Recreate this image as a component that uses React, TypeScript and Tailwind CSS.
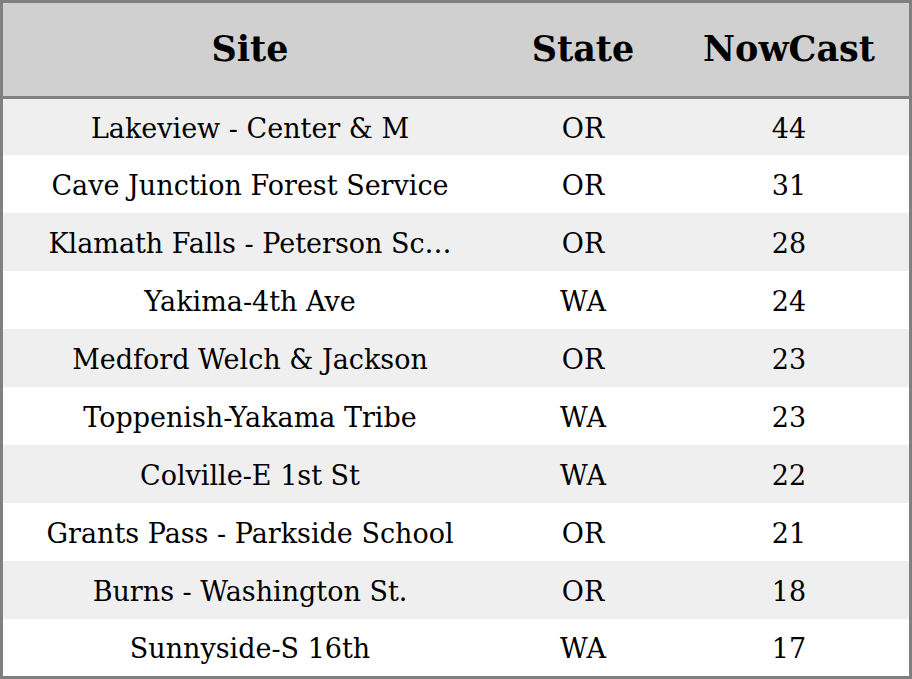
import React from "react";

const rows: [string, string, string][] = [
  ["Lakeview - Center & M", "OR", "44"],
  ["Cave Junction Forest Service", "OR", "31"],
  ["Klamath Falls - Peterson Sc\u2026", "OR", "28"],
  ["Yakima-4th Ave", "WA", "24"],
  ["Medford Welch & Jackson", "OR", "23"],
  ["Toppenish-Yakama Tribe", "WA", "23"],
  ["Colville-E 1st St", "WA", "22"],
  ["Grants Pass - Parkside School", "OR", "21"],
  ["Burns - Washington St.", "OR", "18"],
  ["Sunnyside-S 16th", "WA", "17"],
];

const heights = ["h-[56px]", "h-[58px]", "h-[58px]", "h-[58px]", "h-[58px]", "h-[58px]", "h-[58px]", "h-[58px]", "h-[58px]", "h-[57px]"];

export default function App() {
  return (
    <div
      className="w-[912px] h-[679px] bg-white border-[3px] border-[#808080] flex flex-col text-black"
      style={{ fontFamily: '"DejaVu Serif", serif' }}
    >
      <div className="h-[96px] shrink-0 bg-[#d0d0d0] border-b-[3px] border-[#808080] grid grid-cols-[494px_172px_240px] items-center font-bold text-[35px]">
        <div className="text-center">Site</div>
        <div className="text-center">State</div>
        <div className="text-center">NowCast</div>
      </div>
      {rows.map((r, i) => (
        <div
          key={i}
          className={`${heights[i]} shrink-0 grid grid-cols-[494px_172px_240px] items-center text-[27px] leading-[1.3] pt-[3px] ${i % 2 === 0 ? "bg-[#efefef]" : "bg-white"}`}
        >
          <div className="text-center whitespace-nowrap">{r[0]}</div>
          <div className="text-center">{r[1]}</div>
          <div className="text-center">{r[2]}</div>
        </div>
      ))}
    </div>
  );
}
